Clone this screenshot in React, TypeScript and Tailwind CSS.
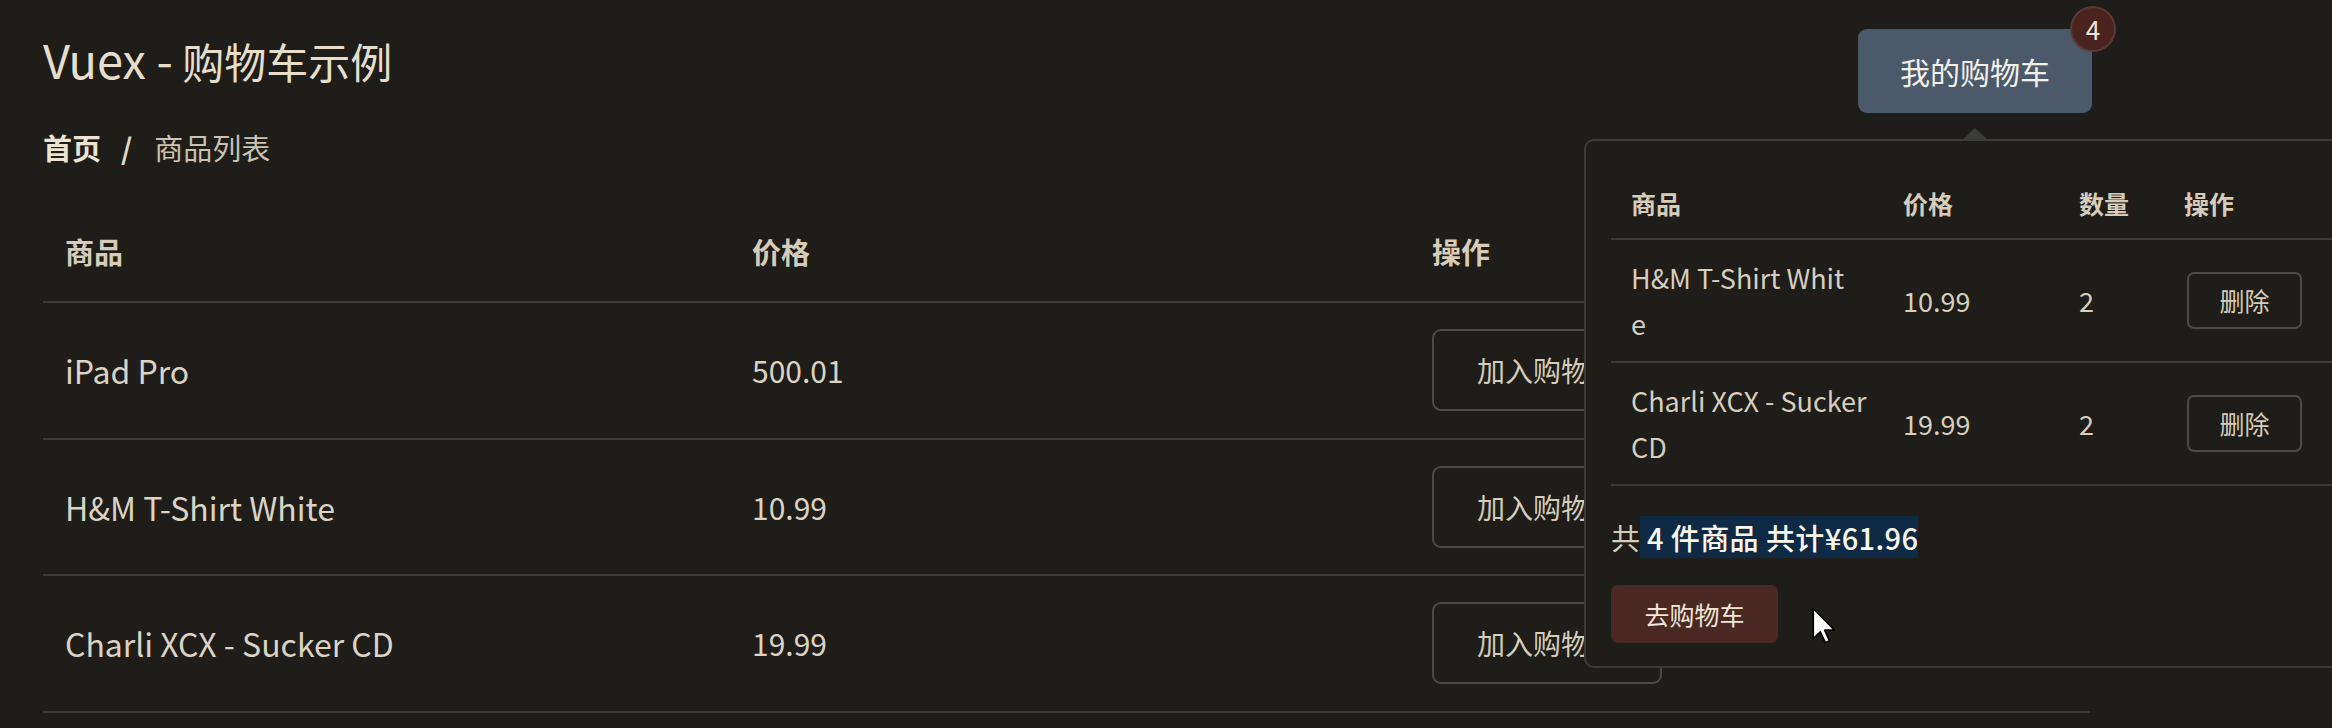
import React from 'react';

interface Product {
    id: number;
    title: string;
    price: number;
}

interface CartItem {
    id: number;
    lines: string[];
    price: number;
    quantity: number;
}

const products: Product[] = [
    { id: 1, title: 'iPad Pro', price: 500.01 },
    { id: 2, title: 'H&M T-Shirt White', price: 10.99 },
    { id: 3, title: 'Charli XCX - Sucker CD', price: 19.99 },
];

const cartItems: CartItem[] = [
    { id: 2, lines: ['H&M T-Shirt Whit', 'e'], price: 10.99, quantity: 2 },
    { id: 3, lines: ['Charli XCX - Sucker', 'CD'], price: 19.99, quantity: 2 },
];

function CartPopover() {
    const count = cartItems.reduce((sum, item) => sum + item.quantity, 0);
    const total = cartItems.reduce((sum, item) => sum + item.price * item.quantity, 0);

    return (
        <div className="absolute left-[-274px] top-[110px] w-[820px] rounded-[10px] border-2 border-[#3b3b39] bg-[#1e1d1a] pb-[23px] pl-[25px] pt-[28px]">
            {/* little caret pointing up at the cart button */}
            <span className="absolute left-[376px] top-[-13px] h-0 w-0 border-x-[13px] border-b-[12px] border-x-transparent border-b-[#3b3b39]" />

            <div className="grid h-[71px] grid-cols-[272px_176px_105px_1fr] items-center border-b-2 border-[#3b3b39] text-[25px] font-bold leading-none text-[#d6ccb9]">
                <div className="pl-[20px]">商品</div>
                <div className="pl-[20px]">价格</div>
                <div className="pl-[20px]">数量</div>
                <div className="pl-[20px]">操作</div>
            </div>

            {cartItems.map((item) => (
                <div
                    key={item.id}
                    className="grid h-[123px] grid-cols-[272px_176px_105px_1fr] items-center border-b-2 border-[#3b3b39] text-[27px] text-[#d8cebc]"
                >
                    <div className="pl-[20px] leading-[46px]">
                        {item.lines.map((line) => (
                            <div key={line}>{line}</div>
                        ))}
                    </div>
                    <div className="pl-[20px] leading-none">{item.price}</div>
                    <div className="pl-[20px] leading-none">{item.quantity}</div>
                    <div className="pl-[20px]">
                        <button className="ml-[3px] h-[57px] w-[115px] rounded-[7px] border-2 border-[#4b4b49] text-[25px] leading-none text-[#d6ccb9]">
                            删除
                        </button>
                    </div>
                </div>
            ))}

            <div className="mt-[30px] text-[29px] leading-[43px] text-[#d8cdb9]">
                共<span className="bg-[#0f2a45] font-medium tracking-[0.4px] text-[#fbf6ea]"> {count} 件商品 共计¥{total.toFixed(2)}</span>
            </div>

            <button className="mt-[26px] h-[58px] w-[167px] rounded-[7px] bg-[#4a2923] text-[25px] leading-none text-[#f1e6d6]">
                去购物车
            </button>
        </div>
    );
}

function CartWidget() {
    return (
        <div className="relative mr-[-2px] mt-[29px]">
            <button className="h-[84px] w-[234px] rounded-[9px] bg-[#4b5a6a] text-[30px] leading-none text-[#f3f0ea]">
                我的购物车
            </button>
            <span className="absolute right-[-22px] top-[-21px] flex h-[42px] w-[42px] items-center justify-center rounded-full bg-[#4a231e] text-[26px] leading-none text-[#f0e4d6] ring-2 ring-[#5a3a33]">
                4
            </span>
            <CartPopover />
        </div>
    );
}

export default function App() {
    return (
        <div className="relative h-[728px] w-[2332px] overflow-hidden bg-[#1e1d1a] font-['Noto_Sans_CJK_SC',sans-serif] text-[#dcd3c2]">
            <div className="pl-[43px] pr-[242px]">
                <div className="flex items-start justify-between">
                    <div>
                        <h1 className="mt-[38px] text-[42px] leading-[42px] text-[#e6ddcb]">
                            <span className="text-[47px]">Vuex -</span> 购物车示例
                        </h1>
                        <nav className="mt-[51px] flex items-center text-[29px] leading-none">
                            <span className="font-bold text-[#ece3d0]">首页</span>
                            <span className="ml-[20px] mr-[22px] font-bold text-[#e2d9c7]">/</span>
                            <span className="text-[#cbc2b1]">商品列表</span>
                        </nav>
                    </div>
                    <CartWidget />
                </div>

                <div className="mt-[40px]">
                    <div className="grid h-[101px] grid-cols-[687px_680px_1fr] items-center border-b-2 border-[#3c3c3a] text-[29px] font-bold leading-none text-[#d6ccb9]">
                        <div className="pl-[22px]">商品</div>
                        <div className="pl-[22px]">价格</div>
                        <div className="pl-[22px]">操作</div>
                    </div>
                    {products.map((product) => (
                        <div
                            key={product.id}
                            className="grid h-[136.5px] grid-cols-[687px_680px_1fr] items-center border-b-2 border-[#3c3c3a] leading-none"
                        >
                            <div className="pl-[22px] text-[32px]">{product.title}</div>
                            <div className="pl-[22px] text-[30px]">{product.price}</div>
                            <div className="pl-[22px]">
                                <button className="h-[82px] w-[230px] rounded-[9px] border-2 border-[#4b4b49] text-[28px] leading-none text-[#d6ccb9]">
                                    加入购物车
                                </button>
                            </div>
                        </div>
                    ))}
                </div>
            </div>

            {/* mouse pointer resting beside the checkout button */}
            <svg className="absolute left-[1812px] top-[607px]" width="25" height="38" viewBox="0 0 12 18">
                <path d="M0.6 0.6 L0.6 15 L4 11.8 L6.4 17 L8.4 16.1 L6.1 11 L10.8 11 Z" fill="#ffffff" stroke="#000000" strokeWidth="0.8" strokeLinejoin="round" />
            </svg>
        </div>
    );
}
